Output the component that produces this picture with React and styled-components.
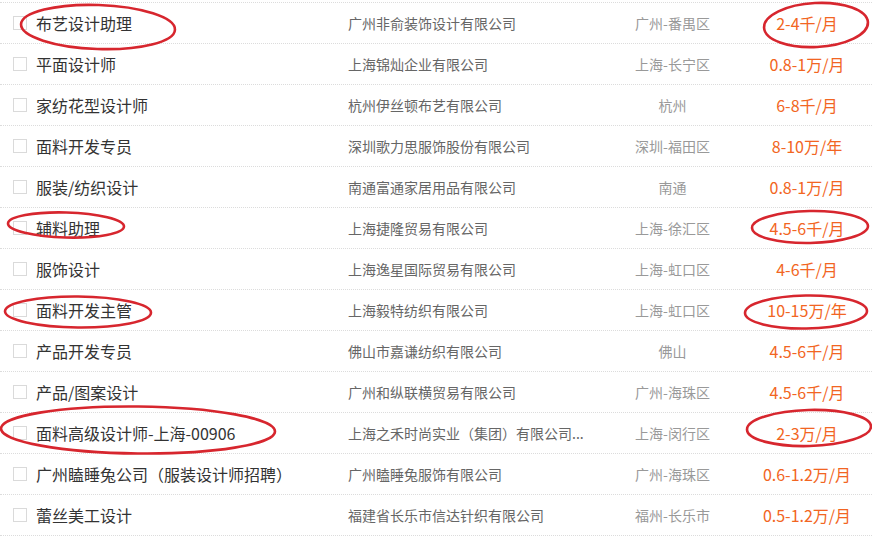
import React from "react";
import styled, { createGlobalStyle } from "styled-components";

const GlobalStyle = createGlobalStyle`
  html, body { margin: 0; padding: 0; background: #fff; }
  body { font-family: "Noto Sans CJK SC", "Noto Sans", sans-serif; }
`;

const jobs = [
  { title: "布艺设计助理", company: "广州非俞装饰设计有限公司", loc: "广州-番禺区", pay: "2-4千/月" },
  { title: "平面设计师", company: "上海锦灿企业有限公司", loc: "上海-长宁区", pay: "0.8-1万/月" },
  { title: "家纺花型设计师", company: "杭州伊丝顿布艺有限公司", loc: "杭州", pay: "6-8千/月" },
  { title: "面料开发专员", company: "深圳歌力思服饰股份有限公司", loc: "深圳-福田区", pay: "8-10万/年" },
  { title: "服装/纺织设计", company: "南通富通家居用品有限公司", loc: "南通", pay: "0.8-1万/月" },
  { title: "辅料助理", company: "上海捷隆贸易有限公司", loc: "上海-徐汇区", pay: "4.5-6千/月" },
  { title: "服饰设计", company: "上海逸星国际贸易有限公司", loc: "上海-虹口区", pay: "4-6千/月" },
  { title: "面料开发主管", company: "上海毅特纺织有限公司", loc: "上海-虹口区", pay: "10-15万/年" },
  { title: "产品开发专员", company: "佛山市嘉谦纺织有限公司", loc: "佛山", pay: "4.5-6千/月" },
  { title: "产品/图案设计", company: "广州和纵联横贸易有限公司", loc: "广州-海珠区", pay: "4.5-6千/月" },
  { title: "面料高级设计师-上海-00906", company: "上海之禾时尚实业（集团）有限公司...", loc: "上海-闵行区", pay: "2-3万/月" },
  { title: "广州瞌睡兔公司（服装设计师招聘）", company: "广州瞌睡兔服饰有限公司", loc: "广州-海珠区", pay: "0.6-1.2万/月" },
  { title: "蕾丝美工设计", company: "福建省长乐市信达针织有限公司", loc: "福州-长乐市", pay: "0.5-1.2万/月" },
];

const marks = [
  { cx: 98, cy: 27, rx: 77, ry: 22, r: 2 },
  { cx: 816, cy: 25, rx: 52, ry: 22, r: -3 },
  { cx: 66, cy: 225, rx: 58, ry: 12.5, r: 1.5 },
  { cx: 810, cy: 227, rx: 58, ry: 16, r: -1 },
  { cx: 78, cy: 312, rx: 73, ry: 15.5, r: 0.5 },
  { cx: 806, cy: 312, rx: 61, ry: 16.5, r: -1 },
  { cx: 138, cy: 430, rx: 137, ry: 23.5, r: 0.6 },
  { cx: 809, cy: 428, rx: 62, ry: 18, r: -1.5 },
];

const Page = styled.div`
  position: relative;
  width: 872px;
  height: 538px;
  overflow: hidden;
  background: #fff;
`;

const List = styled.ul`
  list-style: none;
  margin: 0;
  padding: 2px 0 0 0;
`;

const Row = styled.li`
  display: grid;
  grid-template-columns: 348px 252px 145px 124px;
  align-items: center;
  height: 41px;
  box-sizing: border-box;
  border-top: 1px dotted #dcdcdc;
  &:last-child {
    height: 42px;
    border-bottom: 1px dotted #dcdcdc;
  }
`;

const TitleCell = styled.div`
  display: flex;
  align-items: center;
  gap: 9px;
  padding-left: 13px;
  font-size: 16px;
  color: #333;
  white-space: nowrap;
`;

const Check = styled.span`
  display: inline-block;
  width: 14px;
  height: 14px;
  box-sizing: border-box;
  border: 1px solid #dadada;
  background: #fff;
  flex: none;
`;

const Company = styled.div`
  font-size: 14px;
  color: #666;
  white-space: nowrap;
`;

const Location = styled.div`
  font-size: 14px;
  color: #999;
  text-align: center;
  white-space: nowrap;
`;

const Salary = styled.div`
  font-size: 16px;
  color: #f26522;
  text-align: center;
  white-space: nowrap;
`;

const Marks = styled.svg`
  position: absolute;
  left: 0;
  top: 0;
  pointer-events: none;
`;

export default function App() {
  return (
    <Page>
      <GlobalStyle />
      <List>
        {jobs.map((j) => (
          <Row key={j.title}>
            <TitleCell>
              <Check />
              <span>{j.title}</span>
            </TitleCell>
            <Company>{j.company}</Company>
            <Location>{j.loc}</Location>
            <Salary>{j.pay}</Salary>
          </Row>
        ))}
      </List>
      <Marks width="872" height="538" viewBox="0 0 872 538">
        {marks.map((m, i) => (
          <ellipse
            key={i}
            cx={m.cx}
            cy={m.cy}
            rx={m.rx}
            ry={m.ry}
            fill="none"
            stroke="#d7262e"
            strokeWidth="2.6"
            transform={`rotate(${m.r} ${m.cx} ${m.cy})`}
          />
        ))}
      </Marks>
    </Page>
  );
}
